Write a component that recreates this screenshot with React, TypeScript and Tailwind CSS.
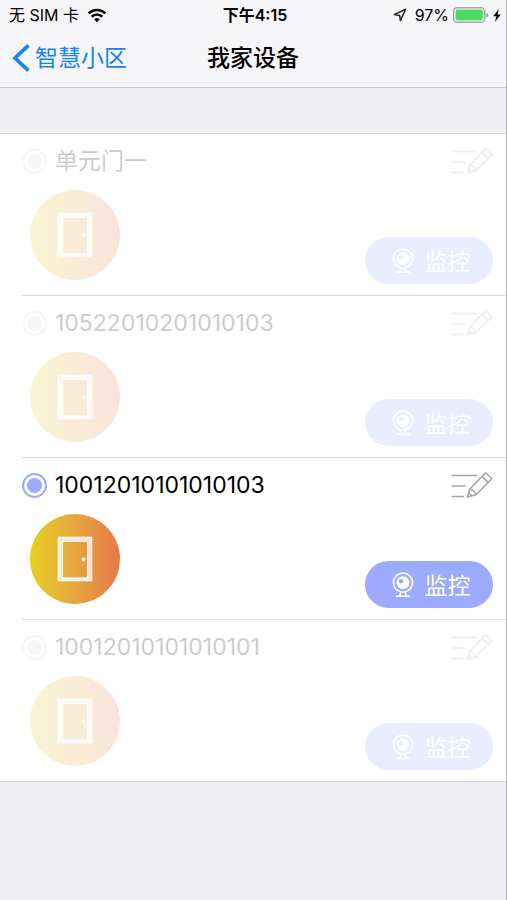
import { clsx } from "clsx";

interface Device {
  id: string;
  name: string;
  online: boolean;
}

const devices: Device[] = [
  { id: "d1", name: "单元门一", online: false },
  { id: "d2", name: "10522010201010103", online: false },
  { id: "d3", name: "10012010101010103", online: true },
  { id: "d4", name: "10012010101010101", online: false },
];

function WifiIcon() {
  return (
    <svg viewBox="0 0 20 15" className="h-[15px] w-5" fill="none" stroke="#000" strokeWidth="2.6">
      <path d="M1.6 5.4a12 12 0 0 1 16.8 0" />
      <path d="M4.7 8.7a7.6 7.6 0 0 1 10.6 0" />
      <path d="M10 14.2 7.2 11.4a4 4 0 0 1 5.6 0z" fill="#000" stroke="none" />
    </svg>
  );
}

function LocationIcon() {
  return (
    <svg viewBox="0 0 14 14" className="h-[14px] w-[14px]" fill="none" stroke="#222" strokeWidth="1.5" strokeLinejoin="round">
      <path d="M12.6 1.2 1.4 6.6l5.2.8.8 5.2z" />
    </svg>
  );
}

function BatteryIcon() {
  return (
    <svg viewBox="0 0 36 16" className="h-4 w-9">
      <rect x="0.7" y="0.7" width="31" height="14.6" rx="3.6" fill="#fff" stroke="#a3a3a6" strokeWidth="1.4" />
      <rect x="2.6" y="2.6" width="27.2" height="10.8" rx="1.6" fill="#4cd964" />
      <path d="M33.2 5.4q2.2 1 2.2 2.6t-2.2 2.6z" fill="#a3a3a6" />
    </svg>
  );
}

function BoltIcon() {
  return (
    <svg viewBox="0 0 8 13" className="h-[13px] w-2" fill="#000">
      <path d="M5.8 0 .3 7.2h3L2 13l5.8-7.6H4.6z" />
    </svg>
  );
}

function DoorIcon() {
  return (
    <svg viewBox="0 0 36 46" className="h-[46px] w-9" fill="none" stroke="#fff">
      <rect x="1.3" y="1.3" width="33.4" height="43.4" strokeWidth="1.2" />
      <rect x="3.2" y="3.2" width="29.6" height="39.6" strokeWidth="3.2" strokeOpacity="0.78" />
      <rect x="5.4" y="5.4" width="25.2" height="37.2" strokeWidth="1.2" />
      <circle cx="26.5" cy="23.5" r="2" fill="#fff" stroke="none" />
    </svg>
  );
}

function EditIcon() {
  return (
    <svg viewBox="0 0 42 28" className="h-7 w-[42px]" fill="none" stroke="#a6a6a6" strokeWidth="1.6" strokeLinejoin="round">
      <path d="M.5 4.5h25.5M.5 15h14M.5 25.5h12.5" />
      <path d="M16.5 26 18.6 18.2 34.6 1.8l6.2 6L25 23.8z" />
      <path d="M18.6 18.2q5 .6 6.4 5.6M17.6 22.4q2.2.4 2.8 2.5M31 5.4l6.2 6" />
    </svg>
  );
}

function CameraIcon() {
  return (
    <svg viewBox="0 0 22 26" className="h-[26px] w-[22px]" fill="none" stroke="#fff">
      <circle cx="11" cy="10.6" r="9.6" strokeWidth="1.6" />
      <path
        d="M11 4.2a6.4 6.4 0 1 0 0 12.8 6.4 6.4 0 0 0 0-12.8zM9 7a2.3 2.3 0 1 1 0 4.6A2.3 2.3 0 0 1 9 7z"
        fill="#fff"
        fillRule="evenodd"
        stroke="none"
      />
      <path d="M8.8 20q0 2.4-2 4M13.2 20q0 2.4 2 4" strokeWidth="1.4" />
      <path d="M4 24.2h14" strokeWidth="1.7" />
    </svg>
  );
}

function DeviceRow({ device }: { device: Device }) {
  return (
    <li className="group pl-[22px] first:pl-0">
      <div className="h-[162px] border-t border-[#d9d9db] group-first:pl-[22px]">
        <div className={clsx("flex h-full flex-col pr-[13px]", !device.online && "opacity-20")}>
          <div className="mb-0.5 flex h-[54px] items-center justify-between">
            <div className="flex items-center gap-2">
              <input
                type="radio"
                id={device.id}
                name="device"
                defaultChecked={device.online}
                disabled={!device.online}
                className={clsx(
                  "h-[25px] w-[25px] appearance-none rounded-full border-2 bg-clip-content p-[3px]",
                  device.online ? "border-[#9caaff] bg-[#9caaff]" : "border-[#d4d4d4] bg-[#d4d4d4]",
                )}
              />
              <label htmlFor={device.id} className="text-[23px] leading-7 text-black">
                {device.name}
              </label>
            </div>
            <button type="button" aria-label="编辑">
              <EditIcon />
            </button>
          </div>
          <div className="flex items-end justify-between pl-2">
            <div className="flex h-[90px] w-[90px] items-center justify-center rounded-full bg-linear-to-r from-[#e3d01e] to-[#e6784a]">
              <DoorIcon />
            </div>
            <button
              type="button"
              className="-mb-1 flex h-[47px] w-32 items-center justify-center gap-[11px] rounded-full bg-[#9caaff] pl-1 text-[23px] text-white"
            >
              <CameraIcon />
              <span className="pt-1">监控</span>
            </button>
          </div>
        </div>
      </div>
    </li>
  );
}

export default function App() {
  return (
    <div className="flex min-h-screen flex-col border-r border-[#b5b5b8] bg-[#efeff4] font-['Inter','Noto_Sans_CJK_SC',sans-serif] text-black">
      <header className="h-[88px] border-b border-[#c4c4c7] bg-[#f6f6f8]">
        <div className="grid h-[30px] grid-cols-3 items-center pr-[5px] pl-[9px] text-base">
          <div className="flex items-center gap-2">
            <span>无 SIM 卡</span>
            <WifiIcon />
          </div>
          <div className="text-center font-semibold">下午4:15</div>
          <div className="flex items-center justify-end gap-1">
            <LocationIcon />
            <span className="pl-1">97%</span>
            <BatteryIcon />
            <BoltIcon />
          </div>
        </div>
        <nav className="grid h-14 grid-cols-3 items-center text-[23px]">
          <a href="#" className="flex items-center gap-[5px] pl-3 text-[#1482fb]">
            <svg viewBox="0 0 18 28" className="h-7 w-[18px]" fill="none" stroke="currentColor" strokeWidth="3.6">
              <path d="M16.4 1.4 3 14l13.4 12.6" />
            </svg>
            智慧小区
          </a>
          <h1 className="text-center font-medium">我家设备</h1>
        </nav>
      </header>
      <main className="pt-[45px]">
        <ul className="border-b border-[#d4d4d8] bg-white">
          {devices.map((device) => (
            <DeviceRow key={device.id} device={device} />
          ))}
        </ul>
      </main>
    </div>
  );
}
